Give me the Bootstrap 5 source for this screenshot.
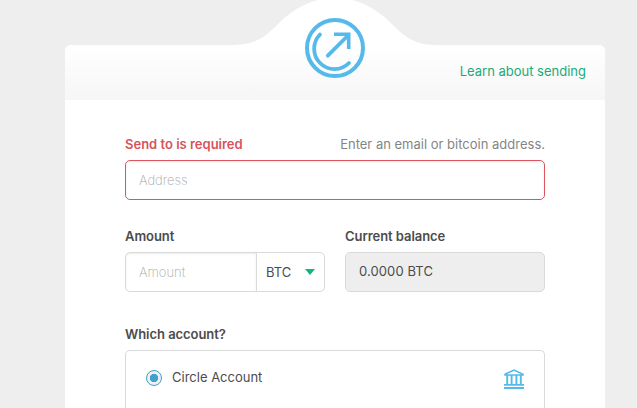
<!DOCTYPE html>
<html lang="en">
<head>
<meta charset="utf-8">
<meta name="viewport" content="width=device-width, initial-scale=1">
<title>Send</title>
<link href="https://cdn.jsdelivr.net/npm/bootstrap@5.3.0/dist/css/bootstrap.min.css" rel="stylesheet">
<style>
body{background:#eee;font-family:Inter,"Open Sans",sans-serif;font-size:13px;line-height:20px;color:#4c4c4c;padding:45px 0 0 65px}
.panel{width:540px;height:363px;background:#fff;border-radius:6px 6px 0 0}
.panel-top{height:55px;padding:16px 19px 0;background:linear-gradient(#fff,#f6f6f6);border-radius:6px 6px 0 0}
.hump{left:170px;top:-47px}
.learn{color:#18ab7b}
.form-area{padding:34px 60px 0}
.strong-label{font-weight:600;line-height:20px;margin:0 0 6px;letter-spacing:-.05px}
.text-err{color:#d8535b;letter-spacing:0}
.hint{color:#858585}
.form-area .form-control{height:40px;font-size:13px;padding:0 13px 1px;border-color:#d9d9d9;border-radius:5px;color:#4c4c4c;box-shadow:inset 0 1px 2px rgba(0,0,0,.08)}
.form-area .form-control::placeholder{color:#a6a6a6;font-weight:200;opacity:1}
.form-area .err-field{border-color:#dc555d}
.form-area .balance{background:#eee;box-shadow:none;letter-spacing:.1px;padding-bottom:2px}
.amount-row{margin-top:26px}
.amount-col{width:200px}
.form-area .amount-in{width:132px;flex:none;border-radius:5px 0 0 5px}
.unit{width:69px;margin-left:-1px;border:1px solid #d9d9d9;border-radius:0 5px 5px 0;padding:0 9px 1px 9px}
.account{height:58px;border:1px solid #d9d9d9;border-bottom:0;border-radius:5px 5px 0 0;padding:16px 20px 0}
.form-area .form-check-input{width:16px;height:16px;margin:3px 10px 0 0;border:1px solid #429fcb;background:radial-gradient(circle,#40a0cf 0 3.8px,#edf1f3 4.5px);box-shadow:none}
.bank-icon{margin-top:2px}
</style>
</head>
<body>
<main class="panel position-relative">
  <header class="panel-top d-flex justify-content-end">
    <svg class="hump position-absolute" width="200" height="92" viewBox="0 0 200 92" fill="none">
      <path d="M0 47C22 47 33 36 42 27C57 12 75 0 100 0C125 0 143 12 158 27C167 36 178 47 200 47Z" fill="#fff"/>
      <g stroke="#55baea">
        <circle cx="100" cy="50" r="28" stroke-width="4"/>
        <path d="M85 36.5A20.2 20.2 0 1 0 114 65" stroke-width="3.8" stroke-linecap="round"/>
        <path d="M92.8 57.7L113 37.5" stroke-width="3.8" stroke-linecap="round"/>
        <path d="M99 36.2H113.7V51" stroke-width="3.6"/>
      </g>
    </svg>
    <a href="#" class="learn text-decoration-none position-relative">Learn about sending</a>
  </header>
  <form class="form-area">
    <div class="d-flex justify-content-between">
      <label class="strong-label text-err" for="addr">Send to is required</label>
      <span class="hint">Enter an email or bitcoin address.</span>
    </div>
    <input id="addr" class="form-control err-field" placeholder="Address">
    <div class="amount-row d-flex justify-content-between">
      <div class="amount-col">
        <label class="strong-label d-block" for="amt">Amount</label>
        <div class="d-flex">
          <input id="amt" class="form-control amount-in" placeholder="Amount">
          <div class="unit d-flex align-items-center justify-content-between"><span>BTC</span>
            <svg width="10" height="6" viewBox="0 0 10 6"><path d="M0 0H10L5 6Z" fill="#12b57f"/></svg>
          </div>
        </div>
      </div>
      <div class="amount-col">
        <label class="strong-label d-block" for="bal">Current balance</label>
        <input id="bal" class="form-control balance" value="0.0000 BTC" readonly>
      </div>
    </div>
    <div class="strong-label mt-4 pt-2">Which account?</div>
    <div class="account d-flex justify-content-between">
      <label class="d-flex"><input class="form-check-input" type="radio" checked><span>Circle Account</span></label>
      <svg class="bank-icon" width="20" height="20" viewBox="0 0 20 20" fill="none" stroke="#55baea">
        <path d="M1 5.3L10 1L19 5.3V6H1Z" stroke-width="1.5"/>
        <path d="M3.2 6V15M7.6 6V15M12.4 6V15M16.8 6V15" stroke-width="1.9"/>
        <path d="M0 15.8H20M0 19H20" stroke-width="1.8"/>
      </svg>
    </div>
  </form>
</main>
<script src="https://cdn.jsdelivr.net/npm/bootstrap@5.3.0/dist/js/bootstrap.bundle.min.js"></script>
</body>
</html>
